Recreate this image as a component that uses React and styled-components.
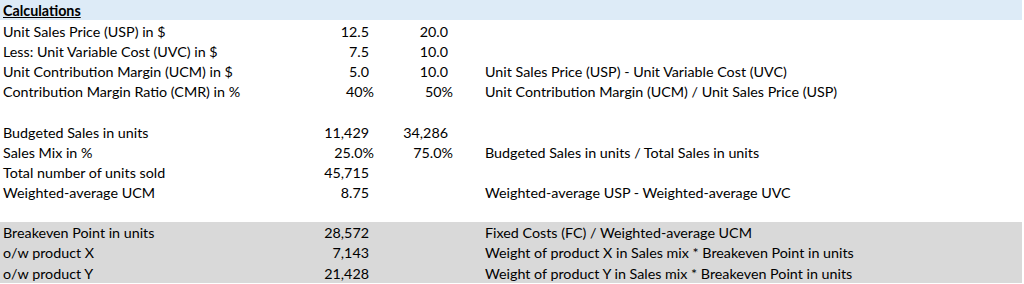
import React from "react";
import styled, { createGlobalStyle } from "styled-components";

const Global = createGlobalStyle`
  html, body { margin: 0; padding: 0; background: #fff; }
  body { font-family: Lato, "Liberation Sans", sans-serif; color: #000; }
`;

const Sheet = styled.div`
  width: 1022px;
  display: flex;
  flex-direction: column;
`;

const Row = styled.div`
  display: grid;
  grid-template-columns: 300px 75px 79px 31px 1fr;
  height: ${(p) => p.$h || 20}px;
  box-sizing: border-box;
  padding-top: 2px;
  align-items: center;
  background: ${(p) => p.$band || "transparent"};
  font-size: 14.3px;
  line-height: 18px;
  white-space: nowrap;
`;

const Label = styled.div`
  padding-left: 3px;
  font-weight: ${(p) => (p.$title ? 700 : 400)};
  text-decoration: ${(p) => (p.$title ? "underline" : "none")};
`;

const Num = styled.div`
  text-align: right;
  padding-right: ${(p) => (p.$pct ? 1 : 6)}px;
`;

const Spacer = styled.div``;

const Note = styled.div`
  padding-left: 0;
`;

const BLUE = "#DDEBF7";
const GRAY = "#D9D9D9";

const rows = [
  { title: true, label: "Calculations", band: BLUE },
  { label: "Unit Sales Price (USP) in $", b: "12.5", c: "20.0", h: 21 },
  { label: "Less: Unit Variable Cost (UVC) in $", b: "7.5", c: "10.0" },
  { label: "Unit Contribution Margin (UCM) in $", b: "5.0", c: "10.0", note: "Unit Sales Price (USP) - Unit Variable Cost (UVC)" },
  { label: "Contribution Margin Ratio (CMR) in %", b: "40%", c: "50%", pct: true, note: "Unit Contribution Margin (UCM) / Unit Sales Price (USP)" },
  { label: "", h: 21 },
  { label: "Budgeted Sales in units", b: "11,429", c: "34,286" },
  { label: "Sales Mix in %", b: "25.0%", c: "75.0%", pct: true, note: "Budgeted Sales in units / Total Sales in units" },
  { label: "Total number of units sold", b: "45,715" },
  { label: "Weighted-average UCM", b: "8.75", note: "Weighted-average USP - Weighted-average UVC" },
  { label: "" },
  { label: "Breakeven Point in units", b: "28,572", note: "Fixed Costs (FC) / Weighted-average UCM", band: GRAY },
  { label: "o/w product X", b: "7,143", note: "Weight of product X in Sales mix * Breakeven Point in units", band: GRAY },
  { label: "o/w product Y", b: "21,428", note: "Weight of product Y in Sales mix * Breakeven Point in units", band: GRAY, h: 21 },
];

export default function App() {
  return (
    <>
      <Global />
      <Sheet>
        {rows.map((r, i) => (
          <Row key={i} $band={r.band} $h={r.h}>
            <Label $title={r.title}>{r.label}</Label>
            <Num $pct={r.pct}>{r.b || ""}</Num>
            <Num $pct={r.pct}>{r.c || ""}</Num>
            <Spacer />
            <Note>{r.note || ""}</Note>
          </Row>
        ))}
      </Sheet>
    </>
  );
}
